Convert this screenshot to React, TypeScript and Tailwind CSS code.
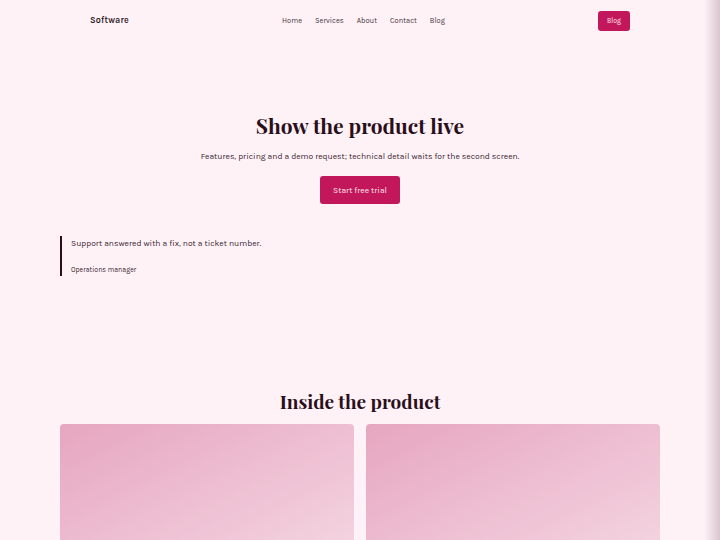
export default function App() {
  const sans = "font-['Karla','Inter','Liberation_Sans',sans-serif]";
  const serif = "font-['Playfair_Display','Liberation_Serif',serif]";
  return (
    <div className={`relative min-h-[540px] w-full overflow-hidden bg-[#fef2f6] text-[#2a1420] ${sans}`}>
      <header className="flex h-[41px] items-center justify-between px-[90px] pt-[1px]">
        <div className="text-[9px] font-semibold tracking-[0.02em] text-[#2a1420]">Software</div>
        <nav className="flex items-center gap-[13px] text-[7.5px] text-[#4a3440]">
          <span>Home</span>
          <span>Services</span>
          <span>About</span>
          <span>Contact</span>
          <span>Blog</span>
        </nav>
        <button className="h-[20px] w-[32px] rounded-[3px] bg-[#c2185b] text-[7px] font-normal text-[#fde4ee]">Blog</button>
      </header>

      <section className="flex flex-col items-center pt-[70px]">
        <h1 className={`${serif} text-[21px] font-bold leading-[28px] text-[#2a0f1a]`}>Show the product live</h1>
        <p className="mt-[11px] text-[8.5px] leading-[12px] text-[#3a2430]">
          Features, pricing and a demo request; technical detail waits for the second screen.
        </p>
        <button className="mt-[14px] h-[28px] w-[80px] rounded-[3px] bg-[#c2185b] text-[8.5px] font-normal text-[#fde4ee]">
          Start free trial
        </button>
      </section>

      <div className="mx-[60px] mt-[32px] border-l-2 border-[#2a0f1a] pl-[9px] pt-[1px] pb-[1px]">
        <p className="text-[8.5px] leading-[12px] text-[#3a2430]">Support answered with a fix, not a ticket number.</p>
        <p className="mt-[16px] text-[7px] leading-[10px] text-[#3a2430]">Operations manager</p>
      </div>

      <section className="mx-[60px] mt-[113px]">
        <h2 className={`${serif} text-center text-[19px] font-bold leading-[24px] text-[#2a0f1a]`}>Inside the product</h2>
        <div className="mt-[11px] grid grid-cols-2 gap-[12px]">
          <div className="h-[140px] rounded-[4px] bg-gradient-to-br from-[#e6a6c0] to-[#f4d6e2]" />
          <div className="h-[140px] rounded-[4px] bg-gradient-to-br from-[#e6a6c0] to-[#f4d6e2]" />
        </div>
      </section>

      <div className="pointer-events-none absolute inset-y-0 right-0 w-[16px] bg-gradient-to-r from-transparent to-[#d9c6cf]" />
    </div>
  );
}
